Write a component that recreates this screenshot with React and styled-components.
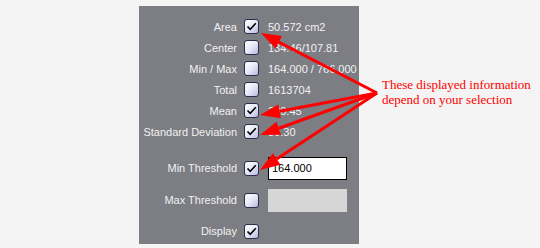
import React from "react";
import styled, { createGlobalStyle } from "styled-components";

const GlobalStyle = createGlobalStyle`
  html, body {
    margin: 0;
    padding: 0;
    background: #f4f4f4;
  }
`;

const Page = styled.div`
  position: relative;
  width: 540px;
  height: 248px;
  display: flex;
  align-items: flex-start;
  background: #f4f4f4;
  overflow: hidden;
`;

const Panel = styled.div`
  margin: 6px 0 0 139px;
  width: 220px;
  height: 238px;
  box-sizing: border-box;
  padding-top: 10px;
  background: #7d7d84;
  display: flex;
  flex-direction: column;
  font-family: "Liberation Sans", Arial, sans-serif;
  font-size: 11px;
  color: #f2f2f2;
`;

const Row = styled.div`
  display: flex;
  align-items: center;
  height: ${(p) => p.h || 21}px;
  margin-top: ${(p) => p.gap || 0}px;
`;

const Label = styled.div`
  width: 98px;
  flex-shrink: 0;
  text-align: right;
  margin-right: 7px;
  white-space: nowrap;
`;

const Box = styled.div`
  width: 15px;
  height: 15px;
  box-sizing: border-box;
  border: 1px solid #2e2e4a;
  border-radius: 3px;
  background: linear-gradient(135deg, #ffffff 0%, #e8e8f6 50%, #b8b8e0 100%);
  display: flex;
  align-items: center;
  justify-content: center;
  margin-right: 9px;
  flex-shrink: 0;
`;

const Value = styled.div`
  white-space: nowrap;
`;

const Field = styled.div`
  width: 79px;
  height: 23px;
  box-sizing: border-box;
  border: ${(p) => (p.disabled ? "none" : "1px solid #000")};
  background: ${(p) => (p.disabled ? "#d6d6d6" : "#fff")};
  color: #000;
  padding-left: 3px;
  display: flex;
  align-items: center;
`;

const Note = styled.div`
  margin: 77px 0 0 23px;
  font-family: "Liberation Serif", serif;
  font-size: 13px;
  line-height: 15px;
  color: #ff0000;
`;

const Overlay = styled.svg`
  position: absolute;
  left: 0;
  top: 0;
  pointer-events: none;
`;

const Check = ({ on }) => (
  <Box>
    {on && (
      <svg width="11" height="11" viewBox="0 0 11 11">
        <path d="M1.5 5.5 L4.2 8.3 L9.8 2.2" fill="none" stroke="#000" strokeWidth="1.6" />
      </svg>
    )}
  </Box>
);

const rows = [
  { label: "Area", on: true, value: "50.572 cm2" },
  { label: "Center", on: false, value: "134.46/107.81" },
  { label: "Min / Max", on: false, value: "164.000 / 766.000" },
  { label: "Total", on: false, value: "1613704" },
  { label: "Mean", on: true, value: "380.45" },
  { label: "Standard Deviation", on: true, value: "80.30" },
];

const origin = [377, 93];
const tips = [
  [261, 33],
  [260, 115],
  [260, 135],
  [260, 170],
];

const Arrow = ({ to }) => {
  const [x1, y1] = origin;
  const [x2, y2] = to;
  const a = Math.atan2(y2 - y1, x2 - x1);
  const len = 20;
  const w = 7;
  const bx = x2 - len * Math.cos(a);
  const by = y2 - len * Math.sin(a);
  const px = -Math.sin(a) * w;
  const py = Math.cos(a) * w;
  return (
    <g>
      <line x1={x1} y1={y1} x2={bx} y2={by} stroke="#ff0000" strokeWidth="3" />
      <polygon
        points={`${x2},${y2} ${bx + px},${by + py} ${bx - px},${by - py}`}
        fill="#ff0000"
      />
    </g>
  );
};

export default function App() {
  return (
    <Page>
      <GlobalStyle />
      <Panel>
        {rows.map((r) => (
          <Row key={r.label}>
            <Label>{r.label}</Label>
            <Check on={r.on} />
            <Value>{r.value}</Value>
          </Row>
        ))}
        <Row h={24} gap={14}>
          <Label>Min Threshold</Label>
          <Check on />
          <Field>164.000</Field>
        </Row>
        <Row h={22} gap={9}>
          <Label>Max Threshold</Label>
          <Check />
          <Field disabled />
        </Row>
        <Row h={22} gap={9}>
          <Label>Display</Label>
          <Check on />
        </Row>
      </Panel>
      <Note>
        These displayed information
        <br />
        depend on your selection
      </Note>
      <Overlay width="540" height="248">
        {tips.map((t, i) => (
          <Arrow key={i} to={t} />
        ))}
      </Overlay>
    </Page>
  );
}
